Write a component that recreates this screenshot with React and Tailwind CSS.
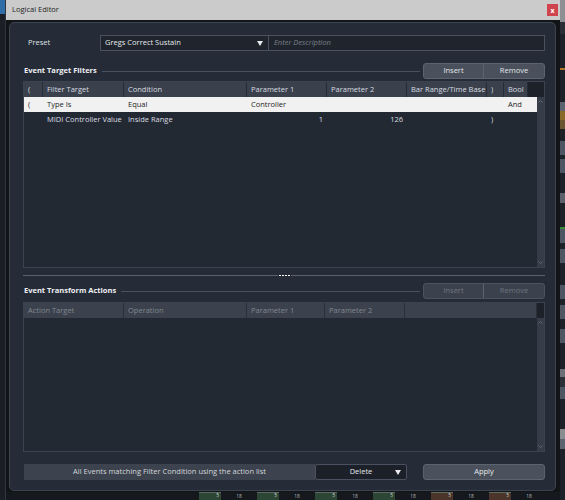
import React from "react";

const filterCols = ["w-[19px]", "w-[81px]", "w-[123px]", "w-[80px]", "w-[80px]", "w-[80px]", "w-[17px]", "w-[24px]"];
const filterHeads = ["(", "Filter Target", "Condition", "Parameter 1", "Parameter 2", "Bar Range/Time Base", ")", "Bool"];

const filterRows = [
  { selected: true, cells: ["(", "Type Is", "Equal", "Controller", "", "", "", "And"] },
  { selected: false, cells: ["", "MIDI Controller Value", "Inside Range", "1", "126", "", ")", ""] },
];

const actionCols = ["w-[100px]", "w-[123px]", "w-[78px]", "w-[80px]", "flex-1"];
const actionHeads = ["Action Target", "Operation", "Parameter 1", "Parameter 2", ""];

const Chevron = ({ up }) => (
  <svg width="5" height="3" viewBox="0 0 5 3" className="block">
    <polyline
      points={up ? "0.5,2.5 2.5,0.5 4.5,2.5" : "0.5,0.5 2.5,2.5 4.5,0.5"}
      fill="none"
      stroke="#6b7381"
      strokeWidth="0.8"
    />
  </svg>
);

const Caret = () => (
  <svg width="6" height="5" viewBox="0 0 6 5" className="block">
    <polygon points="0,0 6,0 3,5" fill="#e8eaee" />
  </svg>
);

function Scrollbar() {
  return (
    <div className="w-[7px] flex flex-col bg-[#363d49]">
      <div className="h-[15px] bg-[#1d2129]" />
      <div className="flex-1 flex flex-col items-center justify-between py-[3px]">
        <Chevron up />
        <Chevron />
      </div>
    </div>
  );
}

function ButtonPair({ disabled }) {
  const text = disabled ? "text-[#6e7580]" : "text-[#e4e6ea]";
  return (
    <div
      className={`flex w-[122px] h-[16px] rounded-[3px] border ${
        disabled ? "border-[#4c535e] bg-[#3b424d]" : "border-[#5d646f] bg-[#4a515c]"
      }`}
    >
      <div className={`w-[60px] flex items-center justify-center border-r border-[#5d646f] ${text}`}>Insert</div>
      <div className={`flex-1 flex items-center justify-center ${text}`}>Remove</div>
    </div>
  );
}

function SectionHeader({ title, disabled }) {
  return (
    <div className="flex items-center h-[16px]">
      <span className="pl-[1px] font-bold text-[#eef0f3] whitespace-nowrap">{title}</span>
      <div className="flex-1 h-px bg-[#4a5160] ml-[5px] mr-[3px]" />
      <ButtonPair disabled={disabled} />
    </div>
  );
}

function FilterTable() {
  return (
    <div className="mt-[2px] h-[187px] flex border border-[#3b4250] bg-[#232933]">
      <div className="flex-1 flex flex-col">
        <div className="flex h-[15px]">
          {filterHeads.map((h, i) => (
            <div
              key={i}
              className={`${filterCols[i]} flex items-center pl-[4px] bg-[#3a414c] border-r border-[#272d36] text-[#d8dbe0] whitespace-nowrap overflow-hidden`}
            >
              {h}
            </div>
          ))}
          <div className="flex-1 bg-[#1d2129]" />
        </div>
        {filterRows.map((row, r) => (
          <div
            key={r}
            className={`flex h-[15px] ${row.selected ? "bg-[#f1f1f1] text-[#1e1e1e]" : "text-[#dadde2]"}`}
          >
            {row.cells.map((c, i) => (
              <div
                key={i}
                className={`${filterCols[i]} flex items-center whitespace-nowrap ${
                  /^\d+$/.test(c) ? "justify-end pr-[4px]" : "pl-[4px]"
                }`}
              >
                {c}
              </div>
            ))}
          </div>
        ))}
      </div>
      <Scrollbar />
    </div>
  );
}

function ActionTable() {
  return (
    <div className="mt-[3px] h-[150px] flex border border-[#3b4250] bg-[#232933]">
      <div className="flex-1 flex flex-col">
        <div className="flex h-[15px]">
          {actionHeads.map((h, i) => (
            <div
              key={i}
              className={`${actionCols[i]} flex items-center pl-[4px] bg-[#3b424d] border-r border-[#2a3039] text-[#80868f] whitespace-nowrap`}
            >
              {h}
            </div>
          ))}
        </div>
      </div>
      <Scrollbar />
    </div>
  );
}

function Splitter() {
  return (
    <div className="mt-[6px] flex items-center h-[2px]">
      <div className="flex-1 h-px bg-[#5a616c]" />
      <div className="flex gap-[1px] px-[1px]">
        <div className="w-[2px] h-[1px] bg-white" />
        <div className="w-[2px] h-[1px] bg-white" />
        <div className="w-[2px] h-[1px] bg-white" />
        <div className="w-[2px] h-[1px] bg-white" />
      </div>
      <div className="flex-1 h-px bg-[#5a616c]" />
    </div>
  );
}

const mixerSegs = ["bg-[#2c4535]", "bg-[#2c4535]", "bg-[#2c4535]", "bg-[#2c4535]", "bg-[#4b3429]", "bg-[#4b3429]"];

function MixerStrip() {
  return (
    <div className="h-[8px] flex bg-[#15181d] pl-[193px] overflow-hidden">
      {mixerSegs.map((c, i) => (
        <div key={i} className="w-[58px] flex items-start">
          <div className={`w-[22px] h-[8px] ${c} border-t border-[#5e6b62] flex justify-end pr-[2px] text-[5px] leading-none text-[#cfd3cf]`}>
            5
          </div>
          <div className="flex-1 flex justify-center pt-[2px] text-[5px] leading-none text-[#aeb3b8]">18</div>
        </div>
      ))}
    </div>
  );
}

const rightBlocks = [
  ["h-[22px]", "bg-[#8d8f93]"],
  ["h-[12px]", "bg-[#2a2f37]"],
  ["h-[34px]", "bg-[#1d2128]"],
  ["h-[2px]", "bg-[#b0762c]"],
  ["h-[32px]", "bg-[#1d2128]"],
  ["h-[9px]", "bg-[#5c6470]"],
  ["h-[9px]", "bg-[#8a6b2c]"],
  ["h-[9px]", "bg-[#6b5530]"],
  ["h-[12px]", "bg-[#1d2128]"],
  ["h-[14px]", "bg-[#4e5663]"],
  ["h-[4px]", "bg-[#1d2128]"],
  ["h-[14px]", "bg-[#4e5663]"],
  ["h-[20px]", "bg-[#1d2128]"],
  ["h-[10px]", "bg-[#5b606a]"],
  ["h-[24px]", "bg-[#1d2128]"],
  ["h-[2px]", "bg-[#3d8a3d]"],
  ["h-[14px]", "bg-[#4e5663]"],
  ["h-[6px]", "bg-[#1d2128]"],
  ["h-[14px]", "bg-[#4e5663]"],
  ["h-[22px]", "bg-[#1d2128]"],
  ["h-[14px]", "bg-[#4e5663]"],
  ["h-[6px]", "bg-[#1d2128]"],
  ["h-[14px]", "bg-[#4e5663]"],
  ["h-[10px]", "bg-[#1d2128]"],
  ["h-[14px]", "bg-[#4e5663]"],
  ["h-[26px]", "bg-[#1d2128]"],
  ["h-[8px]", "bg-[#6b6f76]"],
  ["h-[10px]", "bg-[#2b3038]"],
  ["h-[12px]", "bg-[#4e5663]"],
  ["h-[30px]", "bg-[#1d2128]"],
  ["h-[10px]", "bg-[#8a8c90]"],
  ["h-[10px]", "bg-[#5c6470]"],
  ["flex-1", "bg-[#1d2128]"],
];

export default function App() {
  return (
    <div className="w-[565px] h-[500px] flex bg-[#1b1f26] overflow-hidden font-['Open_Sans',sans-serif] text-[7.5px] leading-none">
      {/* host window, left edge */}
      <div className="w-[6px] flex flex-col bg-[#1b1f25] border-r border-[#30363f]">
        <div className="h-[14px] bg-[#2f6ea8]" />
      </div>

      <div className="w-[554px] flex flex-col">
        {/* title bar */}
        <div className="h-[20px] flex items-center justify-between pl-[6px] pr-[2px] bg-[#cbcbcb] text-[#1c1c1c]">
          <span>Logical Editor</span>
          <div className="w-[11px] h-[12px] flex items-center justify-center bg-[#cf444d] text-white text-[7px] font-bold">
            x
          </div>
        </div>

        <div className="h-[472px] flex flex-col bg-[#121418] pl-[3px] pr-[4px] pt-[2px] pb-[1px]">
          <div className="flex-1 flex flex-col rounded-[5px] border border-[#3c4350] bg-[#262c37] pl-[13px] pr-[10px] pt-[12px]">
            {/* preset */}
            <div className="flex items-center h-[16px]">
              <div className="w-[77px] pl-[5px] text-[#dfe2e6]">Preset</div>
              <div className="flex-1 h-full flex border border-[#4a5160] bg-[#1f242d]">
                <div className="w-[168px] flex items-center justify-between pl-[4px] pr-[5px] border-r border-[#4a5160] text-[#e6e8ec]">
                  <span>Gregs Correct Sustain</span>
                  <Caret />
                </div>
                <div className="flex-1 flex items-center pl-[5px] italic text-[#7c828c]">Enter Description</div>
              </div>
            </div>

            <div className="mt-[12px]">
              <SectionHeader title="Event Target Filters" />
            </div>
            <FilterTable />

            <Splitter />

            <div className="mt-[7px]">
              <SectionHeader title="Event Transform Actions" disabled />
            </div>
            <ActionTable />

            {/* apply row */}
            <div className="mt-[12px] flex h-[16px]">
              <div className="w-[291px] ml-px flex items-center justify-center bg-[#3c434e] text-[#d3d6db]">
                All Events matching Filter Condition using the action list
              </div>
              <div className="w-[92px] relative flex items-center justify-center border border-[#4a5160] rounded-[2px] bg-[#1c2129] text-[#e3e5e9]">
                <span>Delete</span>
                <div className="absolute right-[5px] top-[5px]">
                  <Caret />
                </div>
              </div>
              <div className="flex-1" />
              <div className="w-[122px] flex items-center justify-center rounded-[3px] border border-[#5d646f] bg-[#4a515c] text-[#e8eaee]">
                Apply
              </div>
            </div>
          </div>
        </div>

        <MixerStrip />
      </div>

      {/* host window, right edge */}
      <div className="w-[5px] flex flex-col">
        {rightBlocks.map(([h, c], i) => (
          <div key={i} className={`${h} ${c}`} />
        ))}
      </div>
    </div>
  );
}
